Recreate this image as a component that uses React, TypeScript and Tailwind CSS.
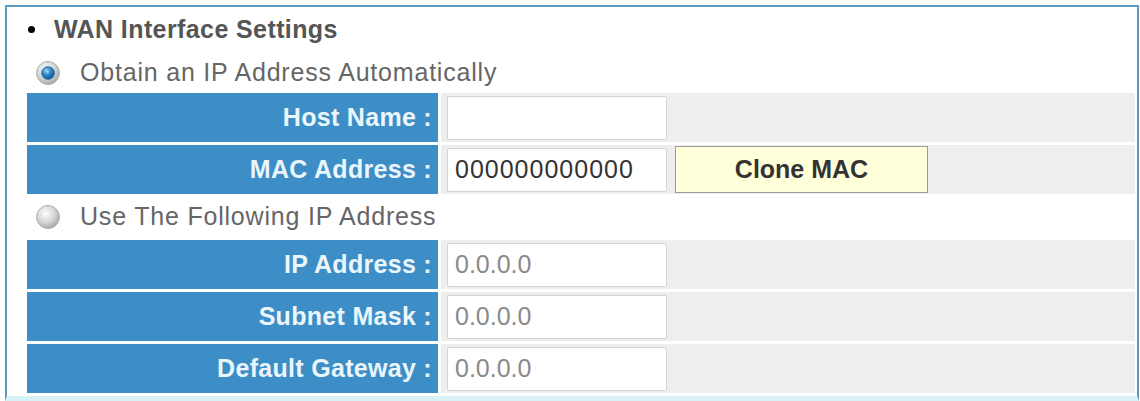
import React from 'react';

const font = { fontFamily: '"Liberation Sans", Arial, Helvetica, sans-serif' };

function Radio({ checked }: { checked: boolean }) {
  return (
    <svg width="26" height="26" viewBox="0 0 26 26" className="shrink-0">
      <defs>
        <radialGradient id={checked ? 'ringOn' : 'ringOff'} cx="40%" cy="35%" r="70%">
          <stop offset="0%" stopColor="#ffffff" />
          <stop offset="55%" stopColor="#d6d6d6" />
          <stop offset="100%" stopColor="#a2a2a2" />
        </radialGradient>
        <radialGradient id="dot" cx="40%" cy="35%" r="70%">
          <stop offset="0%" stopColor="#a6dbf7" />
          <stop offset="45%" stopColor="#2f86c4" />
          <stop offset="100%" stopColor="#0f4f86" />
        </radialGradient>
      </defs>
      <circle cx="13" cy="13" r="11.5" fill={checked ? 'url(#ringOn)' : 'url(#ringOff)'} stroke="#b0b0b0" strokeWidth="1" />
      {checked && <circle cx="13" cy="13" r="6.5" fill="url(#dot)" stroke="#2b6c9c" strokeWidth="0.6" />}
    </svg>
  );
}

function Row({ label, children }: { label: string; children: React.ReactNode }) {
  return (
    <div className="flex h-[49px] gap-[3px]">
      <div className="w-[411px] shrink-0 bg-[#3d8ec6] flex items-center justify-end pr-[6px] text-[25px] font-bold text-[#eaf6fc] tracking-[0.3px]">
        {label}
      </div>
      <div className="flex-1 bg-[#eeeeee] flex items-center pl-[6px]">{children}</div>
    </div>
  );
}

function TextBox({ value, dark }: { value: string; dark?: boolean }) {
  return (
    <div
      className={
        'w-[220px] h-[44px] bg-white border border-[#d4d4d4] rounded-[2px] flex items-center pl-[7px] text-[25px] ' +
        (dark ? 'text-[#333333] tracking-[1px]' : 'text-[#8a8a8a]')
      }
    >
      {value}
    </div>
  );
}

export default function App() {
  return (
    <div className="w-[1140px] h-[401px] bg-white overflow-hidden" style={font}>
      <div className="ml-[5px] mt-[5px] w-[1134px] border-t-2 border-l-2 border-r-2 border-[#5c9cc4] border-b-[5px] border-b-[#d8f2f8] pl-[20px] pr-[2px] pb-[3px] flex flex-col">
        <div className="h-[45px] flex items-center gap-[19px] pl-[1px]">
          <span className="w-[7px] h-[7px] rounded-full bg-black" />
          <span className="text-[25px] font-bold text-[#555555] tracking-[0.4px]">WAN Interface Settings</span>
        </div>
        <div className="h-[41px] flex items-center gap-[19px] pl-[8px]">
          <Radio checked />
          <span className="text-[25px] text-[#666666] tracking-[0.8px]">Obtain an IP Address Automatically</span>
        </div>
        <div className="flex flex-col gap-[3px]">
          <Row label="Host Name :">
            <TextBox value="" />
          </Row>
          <Row label="MAC Address :">
            <TextBox value="000000000000" dark />
            <button className="ml-[8px] w-[253px] h-[47px] bg-[#ffffd9] border border-[#9a9a9a] text-[25px] font-bold text-[#333333]">
              Clone MAC
            </button>
          </Row>
        </div>
        <div className="h-[46px] flex items-center gap-[19px] pl-[8px]">
          <Radio checked={false} />
          <span className="text-[25px] text-[#666666] tracking-[0.8px]">Use The Following IP Address</span>
        </div>
        <div className="flex flex-col gap-[3px]">
          <Row label="IP Address :">
            <TextBox value="0.0.0.0" />
          </Row>
          <Row label="Subnet Mask :">
            <TextBox value="0.0.0.0" />
          </Row>
          <Row label="Default Gateway :">
            <TextBox value="0.0.0.0" />
          </Row>
        </div>
      </div>
    </div>
  );
}
